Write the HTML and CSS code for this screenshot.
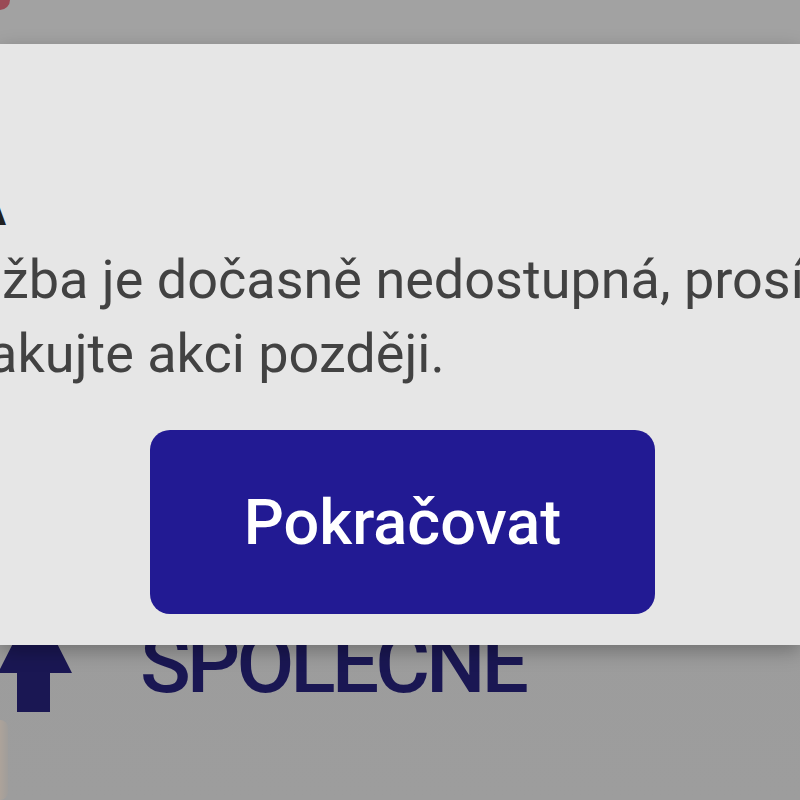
FILE: index.html
```html
<!DOCTYPE html>
<html lang="cs">
<head>
<meta charset="utf-8">
<title>Chyba</title>
<link rel="stylesheet" href="styles.css">
</head>
<body>
<div class="app">
  <header class="app-bar"><span class="app-badge"></span></header>
  <main class="app-content">
    <div class="section-row">
      <svg class="section-icon" width="72" height="112" viewBox="0 0 72 112" aria-hidden="true">
        <polygon points="35,0 72,73 50,73 50,112 17,112 17,73 -2,73" fill="#1a1753"/>
      </svg>
      <h2 class="section-title">SPOLEČNE</h2>
    </div>
    <div class="thumb-edge"></div>
  </main>
</div>

<div class="overlay">
  <div class="dialog" role="dialog">
    <div class="dialog-text">
      <h1 class="dialog-title">CHYBA</h1>
      <p class="dialog-message">Služba je dočasně nedostupná, prosím<br>opakujte akci později.</p>
    </div>
    <div class="dialog-actions">
      <button class="dialog-button" type="button">Pokračovat</button>
    </div>
  </div>
</div>
</body>
</html>
```
FILE: styles.css
```css
html, body {
  margin: 0;
  padding: 0;
}

body {
  width: 800px;
  height: 800px;
  overflow: hidden;
  position: relative;
  font-family: Roboto, "Noto Sans", sans-serif;
  background: #9c9c9c;
}

.app {
  display: flex;
  flex-direction: column;
  height: 800px;
}

.app-bar {
  height: 44px;
  background: #a2a2a2;
  position: relative;
  flex: none;
}

.app-badge {
  position: absolute;
  left: -10px;
  top: -10px;
  width: 20px;
  height: 20px;
  border-radius: 50%;
  background: #9a4a55;
}

.app-content {
  flex: 1;
  background: linear-gradient(#999999, #9d9d9d);
  padding-top: 556px;
  display: flex;
  flex-direction: column;
}

.section-row {
  display: flex;
  align-items: flex-start;
}

.section-icon {
  display: block;
  flex: none;
}

.section-title {
  margin: 22px 0 0 68px;
  font-family: Roboto, sans-serif;
  font-weight: 500;
  font-size: 84px;
  line-height: 1;
  letter-spacing: -4px;
  color: #1a1753;
}

.thumb-edge {
  width: 8px;
  height: 80px;
  margin-top: 8px;
  border-radius: 0 8px 8px 0;
  background: linear-gradient(90deg, #ad a39a, #a09d9a);
  background: linear-gradient(90deg, #ada39a, #a09d9a);
}

.overlay {
  position: absolute;
  left: 0;
  top: 44px;
  width: 800px;
}

.dialog {
  background: #e6e6e6;
  padding: 140px 0 31px;
  box-shadow: 0 6px 18px rgba(0, 0, 0, 0.28);
}

.dialog-text {
  margin-left: -73px;
}

.dialog-title {
  margin: 0 0 7px -65px;
  font-size: 44px;
  line-height: 52px;
  font-weight: 700;
  color: #202020;
}

.dialog-message {
  margin: 0;
  font-size: 54px;
  line-height: 74px;
  color: #424242;
  white-space: nowrap;
}

.dialog-actions {
  margin-top: 39px;
  padding-left: 150px;
  display: flex;
}

.dialog-button {
  width: 505px;
  height: 184px;
  border: none;
  border-radius: 20px;
  background: #221a93;
  color: #ffffff;
  font-family: Roboto, sans-serif;
  font-weight: 500;
  font-size: 63px;
  display: flex;
  align-items: center;
  justify-content: center;
  padding: 0;
}
```
